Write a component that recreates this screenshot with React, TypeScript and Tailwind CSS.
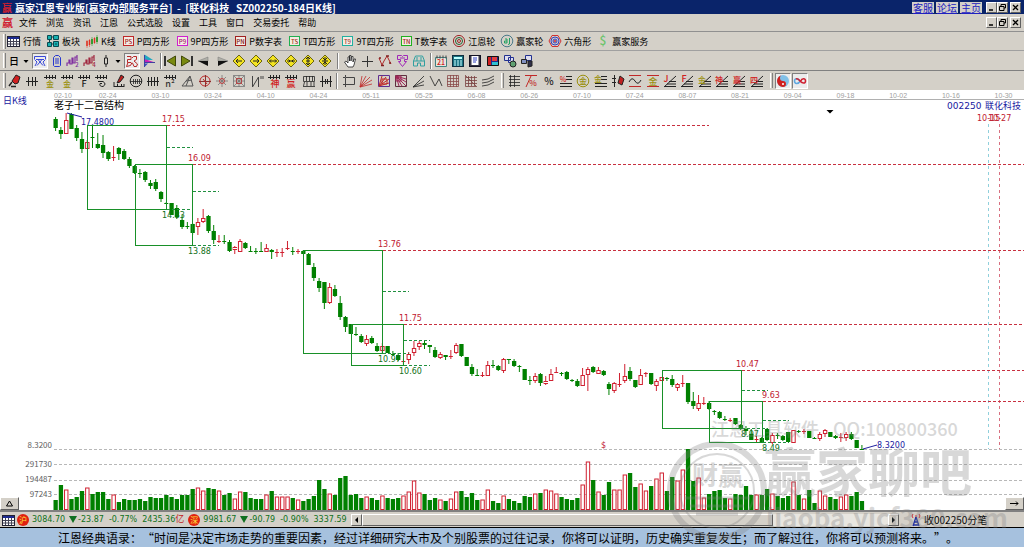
import type { ReactNode } from 'react';
import clsx from 'clsx';

// direction, body top, body bottom, high, low, volume bar height
type Candle = [string, number, number, number, number, number];

const CANDLES: Candle[] = [
  ['g', 119, 128, 117, 131, 10], ['g', 130, 134, 127, 139, 25], ['r', 120, 133, 113, 133, 20], ['g', 114, 129, 113, 129, 11],
  ['g', 128, 138, 125, 141, 13], ['g', 139, 149, 132, 153, 19], ['r', 142, 148, 140, 149, 22], ['g', 137, 137, 125, 148, 16],
  ['g', 144, 148, 133, 149, 18], ['g', 145, 153, 135, 158, 18], ['g', 152, 159, 151, 161, 11], ['r', 157, 157, 146, 161, 15],
  ['g', 148, 154, 147, 160, 8], ['g', 151, 159, 149, 160, 11], ['g', 159, 166, 157, 168, 10], ['g', 166, 173, 165, 174, 10],
  ['g', 173, 173, 169, 178, 11], ['g', 172, 180, 171, 182, 9], ['g', 183, 186, 180, 189, 13], ['g', 182, 189, 179, 191, 12],
  ['g', 192, 199, 191, 202, 12], ['g', 203, 203, 202, 204, 15], ['g', 203, 215, 203, 215, 13], ['g', 208, 217, 205, 219, 11],
  ['g', 220, 227, 215, 229, 15], ['g', 226, 226, 222, 229, 15], ['g', 224, 233, 223, 235, 21], ['r', 222, 226, 218, 235, 22],
  ['r', 218, 221, 209, 223, 19], ['g', 216, 231, 215, 233, 22], ['g', 231, 240, 225, 244, 21], ['r', 241, 241, 235, 243, 19],
  ['g', 241, 241, 235, 244, 15], ['g', 242, 251, 240, 252, 17], ['r', 247, 249, 246, 254, 11], ['r', 241, 251, 239, 252, 18],
  ['g', 243, 248, 242, 249, 18], ['g', 251, 251, 246, 252, 12], ['g', 251, 251, 248, 254, 11], ['g', 251, 251, 242, 251, 11],
  ['r', 248, 251, 244, 251, 15], ['g', 250, 252, 249, 259, 19], ['r', 252, 252, 249, 257, 13], ['r', 252, 252, 248, 257, 13],
  ['r', 248, 248, 241, 250, 13], ['g', 251, 251, 247, 255, 12], ['r', 251, 251, 249, 254, 10], ['g', 251, 254, 250, 254, 9],
  ['g', 254, 265, 253, 265, 11], ['g', 267, 278, 263, 281, 14], ['g', 281, 288, 278, 292, 30], ['g', 282, 303, 282, 309, 21],
  ['r', 287, 302, 283, 304, 16], ['g', 289, 296, 285, 297, 15], ['g', 303, 317, 296, 320, 32], ['g', 317, 327, 316, 332, 34],
  ['g', 324, 334, 324, 334, 15], ['g', 334, 334, 327, 336, 16], ['g', 336, 342, 334, 343, 12], ['r', 339, 343, 335, 346, 13],
  ['g', 338, 343, 336, 344, 12], ['g', 346, 351, 343, 352, 10], ['r', 346, 350, 343, 353, 14], ['g', 346, 353, 346, 353, 12],
  ['g', 354, 354, 351, 356, 11], ['g', 355, 360, 353, 361, 12], ['r', 361, 361, 359, 366, 14], ['r', 354, 359, 352, 364, 18],
  ['r', 348, 352, 341, 356, 29], ['r', 343, 346, 341, 350, 17], ['g', 343, 345, 341, 349, 16], ['g', 345, 347, 345, 353, 10],
  ['g', 350, 357, 347, 358, 12], ['r', 354, 357, 352, 359, 10], ['g', 355, 357, 355, 360, 9], ['r', 356, 356, 350, 359, 11],
  ['r', 345, 352, 343, 354, 18], ['g', 344, 356, 344, 357, 19], ['g', 357, 366, 357, 366, 13], ['g', 367, 374, 364, 376, 17],
  ['g', 375, 375, 369, 376, 10], ['r', 375, 375, 372, 377, 10], ['r', 365, 375, 361, 375, 20], ['g', 365, 365, 360, 368, 9],
  ['g', 366, 370, 365, 371, 7], ['r', 359, 370, 358, 373, 14], ['g', 359, 360, 359, 364, 11], ['g', 361, 366, 359, 367, 9],
  ['g', 366, 366, 365, 372, 7], ['g', 369, 380, 369, 380, 14], ['g', 380, 380, 376, 385, 13], ['r', 376, 380, 373, 383, 16],
  ['g', 374, 383, 373, 386, 17], ['r', 381, 383, 376, 385, 20], ['r', 374, 380, 369, 381, 19], ['r', 372, 372, 367, 373, 16],
  ['g', 373, 373, 372, 376, 13], ['g', 372, 379, 371, 380, 11], ['g', 380, 380, 379, 382, 10], ['g', 381, 386, 379, 387, 12],
  ['r', 375, 385, 368, 386, 25], ['r', 369, 374, 367, 391, 48], ['g', 367, 372, 366, 373, 30], ['r', 370, 373, 367, 374, 18],
  ['g', 371, 375, 370, 376, 15], ['g', 384, 389, 382, 395, 28], ['r', 383, 390, 382, 393, 20], ['r', 384, 384, 373, 387, 20],
  ['r', 376, 380, 364, 383, 35], ['g', 371, 379, 367, 381, 37], ['g', 380, 387, 380, 388, 23], ['r', 375, 384, 369, 385, 26],
  ['r', 373, 373, 372, 377, 19], ['g', 373, 384, 373, 385, 24], ['r', 381, 385, 379, 391, 31], ['r', 377, 380, 377, 380, 37],
  ['g', 378, 379, 377, 381, 19], ['g', 379, 385, 375, 387, 33], ['r', 384, 387, 383, 391, 29], ['r', 383, 383, 375, 387, 40],
  ['g', 383, 402, 383, 404, 61], ['g', 401, 406, 392, 409, 29], ['r', 403, 408, 395, 411, 32], ['r', 403, 403, 397, 405, 12],
  ['g', 403, 409, 401, 410, 16], ['g', 411, 411, 410, 415, 19], ['g', 412, 418, 411, 419, 20], ['g', 419, 419, 416, 421, 12],
  ['r', 420, 420, 418, 422, 11], ['g', 418, 424, 418, 425, 16], ['g', 425, 429, 424, 430, 15], ['g', 429, 431, 426, 435, 24],
  ['g', 434, 440, 429, 440, 15], ['r', 439, 439, 436, 443, 15], ['g', 438, 442, 437, 442, 15], ['g', 429, 440, 428, 441, 21],
  ['r', 435, 442, 433, 444, 16], ['g', 435, 435, 433, 439, 14], ['g', 436, 440, 435, 441, 12], ['g', 432, 442, 432, 442, 14],
  ['r', 430, 442, 430, 442, 28], ['g', 431, 431, 430, 433, 15], ['r', 431, 431, 429, 434, 11], ['g', 431, 438, 431, 438, 20],
  ['g', 438, 438, 437, 439, 7], ['r', 434, 438, 432, 441, 19], ['r', 430, 433, 429, 437, 14], ['g', 432, 437, 432, 437, 13],
  ['g', 436, 438, 435, 439, 11], ['r', 437, 437, 433, 442, 13], ['r', 434, 437, 432, 441, 15], ['g', 434, 439, 432, 440, 14],
  ['g', 440, 448, 440, 448, 18], ['g', 449, 449, 445, 450, 9],
];

const DATES = [
  '02-10', '02-24', '03-10', '03-24', '04-10', '04-24', '05-11', '05-25', '06-08', '06-26',
  '07-10', '07-24', '08-07', '08-21', '09-04', '09-18', '10-02', '10-16', '10-30',
];

const BOXES = [
  { x: 87, r: 167, y: 125, b: 209, mid: 147, end: 709, top: '17.15', low: '14.33', label: 162 },
  { x: 135, r: 193, y: 164, b: 245, mid: 191, end: 1024, top: '16.09', low: '13.88', label: 188 },
  { x: 303, r: 383, y: 250, b: 353, mid: 291, end: 1024, top: '13.76', low: '10.97', label: 378 },
  { x: 351, r: 404, y: 324, b: 365, mid: 340, end: 1024, top: '11.75', low: '10.60', label: 399 },
  { x: 662, r: 742, y: 370, b: 428, mid: 390, end: 1024, top: '10.47', low: '', label: 736 },
  { x: 709, r: 763, y: 401, b: 442, mid: 420, end: 1024, top: '9.63', low: '8.49', label: 762 },
];

const VOLUME_AXIS = [
  { label: '8.3200', y: 448, line: 449 },
  { label: '291730', y: 467, line: 464 },
  { label: '194487', y: 482, line: 480 },
  { label: '97243', y: 497, line: 494 },
];

const RAISED = 'bg-[#d4d0c8] border border-t-white border-l-white border-r-[#606060] border-b-[#606060]';

function Icon({ children }: { children: ReactNode }) {
  return (
    <svg viewBox="0 0 14 14" className="w-[14px] h-[14px] shrink-0 overflow-visible" fill="none" stroke="#222" strokeWidth="1">
      {children}
    </svg>
  );
}

function Word({ x, y, s, c, t }: { x: number; y: number; s: number; c: string; t: string }) {
  return (
    <text x={x} y={y} fontSize={s} fill={c} stroke="none" fontWeight="500" textAnchor="middle" className="font-['Noto_Sans_CJK_SC',sans-serif]">
      {t}
    </text>
  );
}

function BoxIcon({ t, frame, ink }: { t: string; frame: string; ink: string }) {
  return (
    <Icon>
      <rect x="2.500" y="2.500" width="10" height="9" stroke={frame} fill="#f4ece4" />
      <Word x={7.5} y={9.5} s={6} c={ink} t={t} />
    </Icon>
  );
}

const gridIcon = (
  <Icon>
    <rect x="0.5" y="2.500" width="12" height="10" fill="#fff" stroke="#223" />
    <path d="M1 4H12" stroke="#1c2a90" strokeWidth="2" />
    <path d="M1 7.500H12M1 10H12M3.500 5V12M6.500 5V12M9.500 5V12" stroke="#445" />
  </Icon>
);

const MAIN_TOOLS: { text: string; icon: ReactNode }[] = [
  { text: '行情', icon: gridIcon },
  {
    text: '板块',
    icon: (
      <Icon>
        <path d="M1.500 1.500h4v4h-4zM7.500 1.500h5v4h-5zM1.500 8.500h4v4h-4zM7.500 7.500h5v5h-5z" fill="#18b0b0" stroke="#0a4a50" />
        <path d="M5 3h3M3.500 5v3M5 10h3M9 10h2" stroke="#104048" />
      </Icon>
    ),
  },
  {
    text: 'K线',
    icon: (
      <Icon>
        <path d="M2 7v5M4.500 6v5M9.500 4v5" stroke="#e03020" strokeWidth="1.500" />
        <path d="M7 5v5M12 3v5" stroke="#109010" strokeWidth="1.500" />
        <path d="M2 6v8M4.500 5v8M9.500 3v7" stroke="#e03020" strokeWidth="0.500" />
        <path d="M7 3v9M12 1v9" stroke="#109010" strokeWidth="0.500" />
      </Icon>
    ),
  },
  { text: 'P四方形', icon: <BoxIcon t="PS" frame="#c02828" ink="#a02020" /> },
  { text: '9P四方形', icon: <BoxIcon t="P9" frame="#d020d0" ink="#a01060" /> },
  { text: 'P数字表', icon: <BoxIcon t="PN" frame="#a02020" ink="#801010" /> },
  { text: 'T四方形', icon: <BoxIcon t="TS" frame="#20b050" ink="#a03020" /> },
  { text: '9T四方形', icon: <BoxIcon t="T9" frame="#20b0a0" ink="#a03030" /> },
  { text: 'T数字表', icon: <BoxIcon t="TN" frame="#20b020" ink="#a02020" /> },
  {
    text: '江恩轮',
    icon: (
      <Icon>
        <circle cx="7" cy="7" r="5.600" stroke="#a02828" />
        <circle cx="7" cy="7" r="3.500" stroke="#206030" />
        <circle cx="7" cy="7" r="1.500" stroke="#a02828" />
      </Icon>
    ),
  },
  {
    text: '赢家轮',
    icon: (
      <Icon>
        <circle cx="7" cy="7" r="5.800" stroke="#4a7a8a" />
        <path d="M5 5h2v4H4.500V7H7M9.500 4v6l-1.500.5" stroke="#20a060" />
      </Icon>
    ),
  },
  {
    text: '六角形',
    icon: (
      <Icon>
        <path d="M4 1.500h6L13 7l-3 5.500H4L1 7z" stroke="#d03030" />
        <circle cx="7" cy="7" r="4" stroke="#3040c0" />
        <circle cx="7" cy="7" r="2" stroke="#3040c0" />
        <circle cx="7" cy="7" r="0.800" stroke="#d03030" />
      </Icon>
    ),
  },
  { text: '赢家服务', icon: <Icon><Word x={7} y={11} s={12} c="#6cc46c" t="$" /></Icon> },
];

const down = <path d="M0.500 6h5L3 9z" fill="#000" stroke="none" />;

function Diamond({ d }: { d: string }) {
  return (
    <Icon>
      <path d="M7 1L13 7 7 13 1 7z" fill="#f4e420" stroke="#6a6410" />
      <path d={d} stroke="#222" />
    </Icon>
  );
}

function Zig({ c, n }: { c: string; n: string }) {
  return (
    <Icon>
      <path d="M1 12V9h2V6h1v4h2V4h1v5h2V3h2V1M11 3v4" stroke={c} strokeWidth="1.200" />
      <Word x={11} y={13} s={6} c={c} t={n} />
    </Icon>
  );
}

const PERIOD_TOOLS: { icon: ReactNode; on?: boolean }[] = [
  { icon: <Icon><Word x={7} y={11} s={10} c="#000" t="日" /></Icon> },
  { icon: <svg viewBox="0 0 6 14" className="w-1.5 h-[14px]">{down}</svg> },
  {
    on: true,
    icon: (
      <Icon>
        <path d="M1.500 2.500h11M1.500 2.500v3M12.500 2.500v3M3 5.500h8M2 12l2-4-2-2M12 12l-2-4 2-2M4 11.500L7 8l3 3.500M5 5.500L7 8l2-2.500" stroke="#3848d8" />
      </Icon>
    ),
  },
  {
    icon: (
      <Icon>
        <path d="M3.500 3.500l2-2h3l2 2v8l-1 1h-5l-1-1z" stroke="#2838d0" />
        <path d="M5 5h4M5 7h4M5 9h4" stroke="#2838d0" />
      </Icon>
    ),
  },
  { icon: <Zig c="#8030a0" n="2" /> },
  { icon: <Zig c="#a02840" n="4" /> },
  { icon: <Icon><path d="M7 1v3M7 10v3M5.500 4h3v6h-3z" /></Icon> },
  { icon: <svg viewBox="0 0 6 14" className="w-1.5 h-[14px]">{down}</svg> },
  {
    on: true,
    icon: (
      <Icon>
        <path d="M2 2.500h4v3H2.500v3H6M3 8.500l-1.500 4 4-1 1.500-3M7 4l1.500-1.500h3v3L9 7l3.500 3-1 2.500H9L7.500 9" stroke="#b82828" />
      </Icon>
    ),
  },
  {
    icon: (
      <Icon>
        <path d="M2.500 0.500L11 6H2.500z" fill="#20a8c0" stroke="none" />
        <path d="M2.500 5L13 8.500H2.500z" fill="#c820b8" stroke="none" />
        <path d="M2.500 1v12M2 8.500h11" stroke="#4040a0" />
        <path d="M3 9.500l3 0-3 3z" fill="#3050c0" stroke="none" />
      </Icon>
    ),
  },
];

const NAV_TOOLS: ReactNode[] = [
  <Icon key="a"><path d="M2 2v10" stroke="#333" strokeWidth="2" /><path d="M12.500 2v10L4 7z" fill="#7a8a10" stroke="#40480a" /></Icon>,
  <Icon key="b"><path d="M12 2v10" stroke="#333" strokeWidth="2" /><path d="M1.500 2v10L10 7z" fill="#7a8a10" stroke="#40480a" /></Icon>,
  <Icon key="c"><path d="M1 7l10-4v4z" fill="#b0b0a8" stroke="#777" strokeWidth="0.500" /><path d="M1 7h10v5z" fill="#111" stroke="none" /></Icon>,
  <Icon key="d"><path d="M13 7L3 3v4z" fill="#b0b0a8" stroke="#777" strokeWidth="0.500" /><path d="M13 7H3v5z" fill="#111" stroke="none" /></Icon>,
  <Diamond key="e" d="M10 7H4M6 5L4 7l2 2" />,
  <Diamond key="f" d="M4 7h6M8 5l2 2-2 2" />,
  <Diamond key="g" d="M3.500 7h7M5 5.500L3.500 7 5 8.500M9 5.500L10.500 7 9 8.500" />,
  <Diamond key="h" d="M3 7h8M4.500 5.500L6 7 4.500 8.500M9.500 5.500L8 7l1.500 1.500" />,
  <Diamond key="i" d="M7 3v8M5 5l2-2 2 2M5 9l2 2 2-2M5 7h4" />,
  <Diamond key="j" d="M7 3v8M5 4l2 2 2-2M5 10l2-2 2 2M4 7h6" />,
];

const CURSOR_TOOLS: ReactNode[] = [
  <Icon key="a"><path d="M5 13L1.500 8 3 7l2 2V3l1.500-.5V7 1.500H8V7l.5-4.500H10V8l1-3h1.500L11 11l-1 2z" fill="#fff" stroke="#222" strokeWidth="0.800" /></Icon>,
  <Icon key="b"><path d="M7.500 2v11M2 7.500h11" stroke="#333" /></Icon>,
  <Icon key="c"><path d="M1 4l3 7 2-4 3-5 2 4 2 4" stroke="#b02828" /><path d="M1 4h2M3 11.500h3M8 2h3M11 9h2" stroke="#802020" strokeWidth="1.500" /></Icon>,
  <Icon key="d"><path d="M2.500 1.500h4l1 1 1-1h4v4h-3v2h2l-4 5-4-5h2v-2h-3zM5 4h5" stroke="#a028b8" /></Icon>,
  <Icon key="e"><path d="M1.500 12V7l2-5h7l2 5v5h-4V9h-3v3zM2 7h10M5 3v4M9 3v4" stroke="#30a0a0" /></Icon>,
];

const FILE_TOOLS: ReactNode[] = [
  <Icon key="a"><path d="M1.500 3.500h11v9h-11z" fill="#e8e4dc" stroke="#408080" /><path d="M3 1.500v3M6 1.500v3M9 1.500v3M12 1.500v3" stroke="#444" /><Word x={7} y={11} s={7} c="#d02020" t="21" /></Icon>,
  <Icon key="b"><rect x="1.500" y="1.500" width="11" height="11" fill="#187080" stroke="#103040" /><path d="M3 4h8" stroke="#bff" strokeWidth="2" /><path d="M3 7h2M6 7h2M9 7h2M3 9h2M6 9h2M9 9h2M3 11h2M6 11h2M9 11h2" stroke="#cff" /></Icon>,
  <Icon key="c"><rect x="1.500" y="1.500" width="11" height="11" fill="#334" stroke="#112" /><path d="M3.500 2h7v9h-7z" fill="#fff" stroke="none" /><path d="M5 4h4M5 6h4M5 8h3" stroke="#3040c0" /></Icon>,
  <Icon key="d"><path d="M1.500 2.500h11v9h-11z" fill="#202890" stroke="#111" /><path d="M2 3h3v8H2z" fill="#d02020" stroke="none" /><path d="M6 8h6v3H6z" fill="#30c0d0" stroke="none" /><path d="M6 3h5v4H6z" fill="#e04040" stroke="none" /></Icon>,
  <Icon key="e"><path d="M1.500 1.500h6v5h-6zM5.500 3.500h5v5h-5z" fill="#dde" stroke="#223090" /><circle cx="10" cy="10" r="3" fill="#60a070" stroke="#222" /></Icon>,
  <Icon key="f"><path d="M5.500 1.500h6v5h-6z" fill="#dde" stroke="#223090" /><path d="M1.500 5.500h5v4h-5z" fill="#8090c0" stroke="#222" /><path d="M8 7h4v5l-4 1z" fill="#30304a" stroke="#222" /></Icon>,
];

const comb = 'M1 3.500h12M3.500 1v4M6.500 1v4M9.500 1v4M12.500 1v4';
const angle = 'M2 12.500h11M4 10h9M6 7.500h7M1 13L13 2';

const DRAW_TOOLS: ReactNode[] = [
  <Icon key="0"><path d="M8 1l4 2-2 6-3 1-3-3z" fill="#d02020" stroke="#222" /><path d="M4 8l-3 4M3 12.500h5" strokeWidth="1.500" /></Icon>,
  <Icon key="1"><path d="M1 7.500h12M3.500 3v9M7.500 3v9M10.500 3v9" /></Icon>,
  <Icon key="2"><path d={comb} /><Word x={7} y={13} s={8} c="#9a9010" t="金" /></Icon>,
  <Icon key="3"><path d={comb} /><Word x={7} y={13} s={8} c="#9a9010" t="金" /></Icon>,
  <Icon key="4"><path d={comb} /><Word x={7} y={13} s={9} c="#222" t="F" /></Icon>,
  <Icon key="5"><path d={comb} /><path d="M4 7.500h5q4 2.500 0 5-4 0-3-3h2" /></Icon>,
  <Icon key="6"><path d="M9 1l3 2-4 5-3 1z" fill="#c02020" /><path d="M2 8v5M2 12.500h10M5.500 10v3M9.500 10v3M12 10v3" /></Icon>,
  <Icon key="7"><circle cx="7" cy="7" r="5.800" /><path d="M1 7.500h12M4.500 5v5M6.500 5v5M8.500 5v5M10.500 5v5" strokeWidth="0.800" /></Icon>,
  <Icon key="8"><path d="M1 7.500h12M2.500 3v9M5.500 3v9M8.500 3v9M11.500 3v9" /></Icon>,
  <Icon key="9"><path d={comb} /><Word x={7} y={13} s={9} c="#333" t="n²" /></Icon>,
  <Icon key="10"><path d="M1 12L9 2l3 10zM5 7l6-1M5 12L9 2" stroke="#555" /></Icon>,
  <Icon key="11"><circle cx="7" cy="7" r="5" stroke="#c02828" /><path d="M7.500 1v12M1 7.500h12" stroke="#883030" /><path d="M5 5l4 5" stroke="#c02828" /></Icon>,
  <Icon key="12"><path d="M7 1v12M1 7h12M3 3l8 8M11 3l-8 8" stroke="#777" strokeWidth="0.800" /><circle cx="7" cy="7" r="2.500" stroke="#c04040" /></Icon>,
  <Icon key="13"><path d="M1.500 1.500h11v11h-11zM1.500 1.500l11 11M12.500 1.500l-11 11M7 1v12M1 7h12" stroke="#777" strokeWidth="0.800" /><rect x="4.500" y="4.500" width="5" height="5" stroke="#b04848" /></Icon>,
  <Icon key="14"><path d="M2.500 2v11L8.500 3v10M11 2v3M13 2v3" stroke="#444" /></Icon>,
  <Icon key="15"><path d={comb} /><Word x={8} y={13} s={9} c="#d02020" t="神" /></Icon>,
  <Icon key="16"><path d={comb} /><Word x={7} y={13} s={9} c="#d02020" t="赢" /></Icon>,
  <Icon key="17"><path d="M1.500 2.500h11v5h-11zM4.500 2v5M7.500 2v5M10.500 2v5M1.500 12l1-4M5 12V8M9 12V8M12 12V8M1 12.500h12" strokeWidth="0.800" /></Icon>,
  <Icon key="18"><path d="M1 7.500h12M3.500 2v11M6.500 5v5M8.500 5v5M11.500 2v11" /></Icon>,
];

const FAN_TOOLS: ReactNode[] = [
  <Icon key="0"><path d="M3.500 3.500h9v7h-9zM1 3.500h2M3.500 1v2M1 10.500h2M3.500 10v3" stroke="#444" /></Icon>,
  <Icon key="1"><path d="M1 13L3 2M1 13L7 2M1 13L11 3M1 13L13 6M1 13l12-3" stroke="#c02828" strokeWidth="0.800" /></Icon>,
  <Icon key="2"><path d="M1.500 1.500h11v11h-11z" stroke="#603090" /><path d="M2 12L5 2M2 12L9 3M2 12l10-7M2 12l10-3M5 5h5v5H5z" stroke="#c02828" /></Icon>,
  <Icon key="3"><path d="M1.500 1.500h11v11h-11z" stroke="#603040" /><path d="M2 2l10 3M2 2l10 6M2 2l10 10M2 2l6 10M2 2l3 10M2 2h5v5H2z" stroke="#a02858" /></Icon>,
  <Icon key="4"><path d="M1 13L12 2M1 13l11-6M1 13l11-2" strokeWidth="0.800" /></Icon>,
  <Icon key="5"><path d="M1 2l5 10 4-7M10 5l3 7" strokeWidth="0.800" /></Icon>,
  <Icon key="6"><path d="M1.500 1.500h11v11h-11zM4.500 1v12M7.500 1v12M10.500 1v12M1 4.500h12M1 7.500h12M1 10.500h12" stroke="#8a4a4a" strokeWidth="0.800" /></Icon>,
  <Icon key="7"><path d="M1.500 1v11.500H13M4.500 2v10M7.500 2v10M10.500 2v10M2 3.500h11M2 6.500h11M2 9.500h11M2 2l10 10" stroke="#7a4040" strokeWidth="0.800" /></Icon>,
  <Icon key="8"><path d="M1 6l6-1 6-3M1 9l6-1 6-3M1 12l6-1 6-3" strokeWidth="0.800" /></Icon>,
];

const levels = 'M7 2.500h6M7 5.500h6M1 9.500h12M1 12.500h12';

const MEASURE_TOOLS: ReactNode[] = [
  <Icon key="0"><path d="M3.500 1v12M7.500 1v12M2 2.500h11M2 5.500h11M2 8.500h11M2 11.500h11" strokeWidth="0.800" /></Icon>,
  <Icon key="1"><path d="M1 1.500h12M2 13L7 2" stroke="#c02828" /><Word x={9} y={12} s={8} c="#c02828" t="%" /></Icon>,
  <Icon key="2"><Word x={7} y={11} s={10} c="#222" t="%" /></Icon>,
  <Icon key="3"><path d={levels} /><Word x={4} y={8} s={7} c="#d02020" t="%" /></Icon>,
  <Icon key="4"><circle cx="7" cy="7" r="5.800" stroke="#9a9010" /><Word x={7} y={10} s={8} c="#9a9010" t="金" /></Icon>,
  <Icon key="5"><path d={levels} /><Word x={4} y={8} s={8} c="#9a9010" t="金" /></Icon>,
  <Icon key="6"><path d="M3.500 1v12M1 4.500h4M1 8.500h4" /><path d="M9 2l4 3-2 6-4-2z" fill="#c02020" /></Icon>,
  <Icon key="7"><path d="M1 1.500h12M1 12.500h12" stroke="#c02828" /><path d="M1 8q3-6 6-1t6-1" /></Icon>,
  <Icon key="8"><path d="M1 1.500h12M1 12.500h12" stroke="#c02828" /><Word x={7} y={10.5} s={9} c="#9a9010" t="金" /></Icon>,
  <Icon key="9"><path d={angle} /><Word x={3} y={8} s={9} c="#d02020" t="J" /></Icon>,
  <Icon key="10"><path d={angle} /><Word x={4} y={8} s={9} c="#d02020" t="F" /></Icon>,
  <Icon key="11"><path d={angle} /><Word x={4} y={9} s={8} c="#9a9010" t="金" /></Icon>,
  <Icon key="12"><path d={angle} /><Word x={4} y={9} s={8} c="#d02020" t="神" /></Icon>,
  <Icon key="13"><path d={angle} /><Word x={5} y={9} s={8} c="#d02020" t="赢" /></Icon>,
  <Icon key="14"><path d={angle} /><Word x={4} y={9} s={8} c="#d02020" t="四" /></Icon>,
];

const Grip = () => <span className="w-[3px] h-[15px] shrink-0 border-l border-l-white border-r border-r-[#808080]" />;
const Divider = () => <span className="w-0.5 h-4 shrink-0 border-l border-l-[#808080] border-r border-r-white" />;

function IconButton({ on, children }: { on?: boolean; children: ReactNode }) {
  return (
    <button
      className={clsx(
        'flex items-center justify-center shrink-0',
        on && 'w-4 h-4 bg-[#ececec] border border-t-[#808080] border-l-[#808080] border-r-white border-b-white',
      )}
    >
      {children}
    </button>
  );
}

function Group({ className, items }: { className: string; items: ReactNode[] }) {
  return (
    <div className={clsx('flex justify-between shrink-0', className)}>
      {items.map((icon, i) => <IconButton key={i}>{icon}</IconButton>)}
    </div>
  );
}

function WindowButtons() {
  return (
    <div className="flex">
      <button className={clsx(RAISED, 'w-[11px] h-[11px]')}>
        <svg viewBox="0 0 9 9"><path d="M2 7h4" stroke="#000" strokeWidth="1.500" /></svg>
      </button>
      <button className={clsx(RAISED, 'w-[11px] h-[11px]')}>
        <svg viewBox="0 0 9 9" fill="none" stroke="#000"><path d="M3 3V1.500h4.500V5H6M1.500 3.500H6v4H1.500z" /></svg>
      </button>
      <button className={clsx(RAISED, 'w-[11px] h-[11px] ml-0.5')}>
        <svg viewBox="0 0 9 9"><path d="M2 2l5 5M7 2L2 7" stroke="#000" strokeWidth="1.300" /></svg>
      </button>
    </div>
  );
}

function Bar({ c, i }: { c: Candle; i: number }) {
  const [dir, top, bottom, high, low, vol] = c;
  const x = 55.6 + i * 5.27;
  const up = dir === 'r';
  const color = up ? '#d02030' : '#008000';
  const flat = bottom - top < 1;
  return (
    <g stroke={color}>
      {up && !flat ? <path d={`M${x} ${high}V${top}M${x} ${bottom}V${low}`} /> : <path d={`M${x} ${high}V${low}`} />}
      {flat ? (
        <path d={`M${x - 2} ${top + 0.5}h4`} />
      ) : up ? (
        <rect x={x - 1.6} y={top + 0.5} width="3.4" height={bottom - top} fill="#fff" />
      ) : (
        <rect x={x - 2.1} y={top} width="4.3" height={bottom - top} fill={color} stroke="none" />
      )}
      {up ? (
        <rect x={x - 1.6} y={510 - vol} width="3.4" height={vol - 0.5} fill="#fff" />
      ) : (
        <rect x={x - 2.1} y={510 - vol} width="4.3" height={vol} fill={color} stroke="none" />
      )}
    </g>
  );
}

function Chart() {
  return (
    <svg
      viewBox="0 90 1024 420"
      className="block w-full relative z-10 pointer-events-none overflow-visible bg-white font-['Noto_Sans_CJK_SC',sans-serif]"
      fill="none"
    >
      <path d="M54 99.5H1024" stroke="#b0b0b0" />
      <g fontSize="7" fill="#a0a0a0" className="font-['Liberation_Sans',sans-serif]">
        {DATES.map((d, i) => <text key={d} x={i === 0 ? 54 : 46 + i * 52.7} y="97.5">{d}</text>)}
      </g>

      <text x="3" y="104" fontSize="9" fill="#1818a0">日K线</text>
      <text x="54" y="109" fontSize="10" fill="#000">老子十二宫结构</text>
      <g fontSize="9" fill="#1818a0">
        <text x="947" y="109" className="font-['DejaVu_Sans',sans-serif]">002250</text>
        <text x="985" y="109">联化科技</text>
      </g>
      <path d="M826.500 110h7l-3.500 3.500z" fill="#000" />

      <g stroke="#b8b8b8" strokeDasharray="3 2">
        {VOLUME_AXIS.map(a => <path key={a.label} d={`M54 ${a.line + 0.5}H1024`} />)}
      </g>
      <g fontSize="8" fill="#606060" textAnchor="end">
        {VOLUME_AXIS.map(a => <text key={a.label} x="52" y={a.y}>{a.label}</text>)}
      </g>

      <path d="M988.5 124V449" stroke="#90d0dc" strokeDasharray="3 3" />
      <path d="M999.5 124V449" stroke="#d87080" strokeDasharray="3 3" />

      {CANDLES.map((c, i) => <Bar key={i} c={c} i={i} />)}

      {BOXES.map(b => (
        <g key={b.top} fontSize="8" className="font-['DejaVu_Sans',sans-serif]">
          <rect x={b.x + 0.5} y={b.y + 0.5} width={b.r - b.x - 1} height={b.b - b.y} stroke="#189028" />
          <path d={`M${b.r} ${b.y + 0.5}H${b.end}`} stroke="#c83040" strokeDasharray="3 2" />
          <path d={`M${b.r} ${b.mid + 0.5}h26M${b.r} ${b.b + 0.5}h26`} stroke="#209040" strokeDasharray="3 2" />
          <text x={b.label} y={b.y - 3} fill="#c02030">{b.top}</text>
          <text x={b.label} y={b.b + 9} fill="#107020">{b.low}</text>
        </g>
      ))}

      <path d="M67 113l15 4M863 449l14-4" stroke="#2020a0" />
      <g fontSize="8" className="font-['DejaVu_Sans',sans-serif]">
        <text x="81" y="125" fill="#1818a0">17.4800</text>
        <text x="877" y="448" fill="#1818a0">8.3200</text>
        <text x="741" y="437" fill="#107020">8.97</text>
        <text x="977" y="121" fill="#c02030">10-15</text>
        <text x="988" y="121" fill="#c02030">10-27</text>
        <text x="601" y="448" fill="#c02030">$</text>
      </g>

      {/* filigrane par-dessus le graphique et la barre d'état */}
      <g fill="#808080" opacity="0.3">
        <g fontSize="18" fontWeight="500">
          <text x="711" y="436">江恩工具软件</text>
          <text x="833" y="436">QQ:100800360</text>
        </g>
        <text x="764" y="492" fontSize="52" fontWeight="700">赢家聊吧</text>
        <text x="766" y="528" fontSize="26" fontWeight="700">liaoba.yjcf360.com</text>
        <circle cx="717" cy="491" r="47" fill="none" stroke="#808080" strokeWidth="6" />
        <circle cx="717" cy="491" r="37" fill="none" stroke="#808080" strokeWidth="2" />
        <text x="692" y="485" fontSize="26" fontWeight="700">财赢</text>
        <path d="M684 498h66M690 506h54M696 514h42" stroke="#808080" strokeWidth="3" />
      </g>
    </svg>
  );
}

function Index({ mark, value, change, pct, amount }: { mark: string; value: string; change: string; pct: string; amount: string }) {
  return (
    <div className="flex items-center shrink-0">
      <span className="w-3 h-3 mr-[3px] rounded-full bg-[#e02010] text-[#ffe040] text-[8px] leading-3 text-center font-['Noto_Sans_CJK_SC',sans-serif]">{mark}</span>
      <span>{value}</span>
      <svg viewBox="0 0 8 7" className="w-2 h-[7px] ml-1 mr-px"><path d="M0 0h8L4 7z" fill="#107020" /></svg>
      <div className="flex gap-[5px]">
        <span>{change}</span>
        <span>{pct}</span>
        <span>{amount}</span>
      </div>
    </div>
  );
}

export default function App() {
  return (
    <div className="min-h-screen bg-white text-[9px] leading-[13px] text-black font-['Noto_Sans_CJK_SC',sans-serif] overflow-hidden">
      <header className="h-3.5 pl-0.5 pr-[3px] flex items-center bg-[#0a246a] text-white">
        <span className="w-[13px] text-[10px] font-bold text-[#d02030]">赢</span>
        <h1 className="text-[10px] font-bold whitespace-pre">
          赢家江恩专业版[赢家内部服务平台]{'  '}-{'  '}[联化科技{'   '}SZ002250-184日K线]
        </h1>
        <nav className="ml-auto mr-1 flex gap-0.5">
          {['客服', '论坛', '主页'].map(t => (
            <a key={t} href="#" className="w-[22px] h-[11px] leading-[11px] text-[10px] text-center bg-[#d4d0c8] text-[#2020c0] underline">{t}</a>
          ))}
        </nav>
        <WindowButtons />
      </header>

      <nav className="h-[17px] pl-0.5 pr-[3px] flex items-center bg-[#d4d0c8]">
        <span className="w-[17px] text-[11px] font-bold text-[#d02030]">赢</span>
        <div className="flex gap-[9px]">
          {['文件', '浏览', '资讯', '江恩', '公式选股', '设置', '工具', '窗口', '交易委托', '帮助'].map(t => (
            <button key={t}>{t}</button>
          ))}
        </div>
        <div className="ml-auto"><WindowButtons /></div>
      </nav>

      <div className="h-[19px] pl-[3px] flex items-center bg-[#d4d0c8] border-t border-t-[#909090]">
        <Grip />
        <div className="ml-px flex gap-[5px]">
          {MAIN_TOOLS.map(t => (
            <button key={t.text} className="flex items-center gap-0.5 shrink-0">
              {t.icon}
              <span>{t.text}</span>
            </button>
          ))}
        </div>
      </div>

      <div className="h-5 pl-[3px] flex items-center bg-[#d4d0c8] border-t border-t-[#a0a0a0]">
        <Grip />
        <div className="w-[149px] ml-px mr-1 flex justify-between items-center shrink-0">
          {PERIOD_TOOLS.map((t, i) => <IconButton key={i} on={t.on}>{t.icon}</IconButton>)}
        </div>
        <Divider />
        <Group className="w-[169px] mx-px" items={NAV_TOOLS} />
        <span className="w-1" />
        <Divider />
        <Group className="w-[83px] mx-1" items={CURSOR_TOOLS} />
        <Divider />
        <Group className="w-[100px] ml-0.5" items={FILE_TOOLS} />
      </div>

      <div className="h-5 pl-[3px] flex items-center bg-[#d4d0c8] border-t border-t-[#808080]">
        <Grip />
        <Group className="w-[325px] ml-0.5 mr-[3px]" items={DRAW_TOOLS} />
        <Divider />
        <Group className="w-[153px] ml-1 mr-1.5" items={FAN_TOOLS} />
        <Grip />
        <Group className="w-[257px] ml-[3px] mr-1.5" items={MEASURE_TOOLS} />
        <Grip />
        <div className="ml-0.5 flex gap-px">
          <IconButton on>
            <Icon>
              <circle cx="7" cy="7" r="6" fill="#80c0e8" stroke="none" />
              <path d="M7 1a6 6 0 0 0 0 12 3 3 0 0 0 0-6 3 3 0 0 1 0-6" fill="#d02020" stroke="none" />
              <circle cx="7" cy="10" r="1" fill="#fff" stroke="none" />
            </Icon>
          </IconButton>
          <IconButton on>
            <Icon>
              <path d="M7.500 7.500C5 4 1.500 4 1.500 7s3.500 3.500 6 0" stroke="#60a8e0" strokeWidth="1.600" />
              <path d="M3 5c2-1 3 1 4.500 2.500s5 2.500 5-.5-3.500-3-5 .5" stroke="#d02030" strokeWidth="1.600" />
            </Icon>
          </IconButton>
        </div>
      </div>

      <main className="relative">
        <Chart />
        <button className={clsx(RAISED, 'absolute left-0 bottom-0 z-20 w-[19px] h-[13px]')}>
          <svg viewBox="0 0 17 11" fill="none" stroke="#000"><path d="M5.500 8h6l-3-5z" /></svg>
        </button>
        <button className={clsx(RAISED, 'absolute right-0 bottom-0 z-20 w-[19px] h-[13px]')}>
          <svg viewBox="0 0 17 11" fill="none" stroke="#000"><path d="M4 5.500h8M10 3.500l2 2-2 2" /></svg>
        </button>
      </main>

      <footer>
        <div className="h-[18px] pl-0.5 flex items-center bg-[#d4d0c8] border-t-2 border-t-[#808080] border-b border-b-black text-[8px] text-[#107020] font-['DejaVu_Sans','Noto_Sans_CJK_SC',sans-serif]">
          <span className="mr-px">{gridIcon}</span>
          <Index mark="沪" value="3084.70" change="-23.87" pct="-0.77%" amount="2435.36" />
          <span className="mr-1 text-[9px] text-[#c02020]">亿</span>
          <Index mark="深" value="9981.67" change="-90.79" pct="-0.90%" amount="3337.59" />
          <div className="flex-1 h-3 ml-1 flex bg-[#e8e6e0]">
            <button className={clsx(RAISED, 'w-[11px]')}>
              <svg viewBox="0 0 9 10"><path d="M6 2v6L3 5z" fill="#000" /></svg>
            </button>
            <div className={clsx(RAISED, 'w-3/4')} />
            <button className={clsx(RAISED, 'w-[11px] ml-auto')}>
              <svg viewBox="0 0 9 10"><path d="M3 2v6l3-3z" fill="#000" /></svg>
            </button>
          </div>
          <div className="w-[125px] pl-2.5 flex items-center gap-px text-[10px] text-black font-['Noto_Sans_CJK_SC',sans-serif]">
            <Icon>
              <path d="M7 4L4 13M7 4l3 9M5 9h4M4 12h6" stroke="#2030a0" strokeWidth="1.300" />
              <path d="M4 1q-2 2 0 4M10 1q2 2 0 4M7 2v2" stroke="#d03040" />
            </Icon>
            <span>收002250分笔</span>
          </div>
        </div>
        <p className="h-[19px] pl-[58px] text-[12px] leading-[19px] whitespace-nowrap bg-[#a6c1de] [text-spacing-trim:space-all]">
          江恩经典语录：“时间是决定市场走势的重要因素，经过详细研究大市及个别股票的过往记录，你将可以证明，历史确实重复发生；而了解过往，你将可以预测将来。”。
        </p>
      </footer>
    </div>
  );
}
